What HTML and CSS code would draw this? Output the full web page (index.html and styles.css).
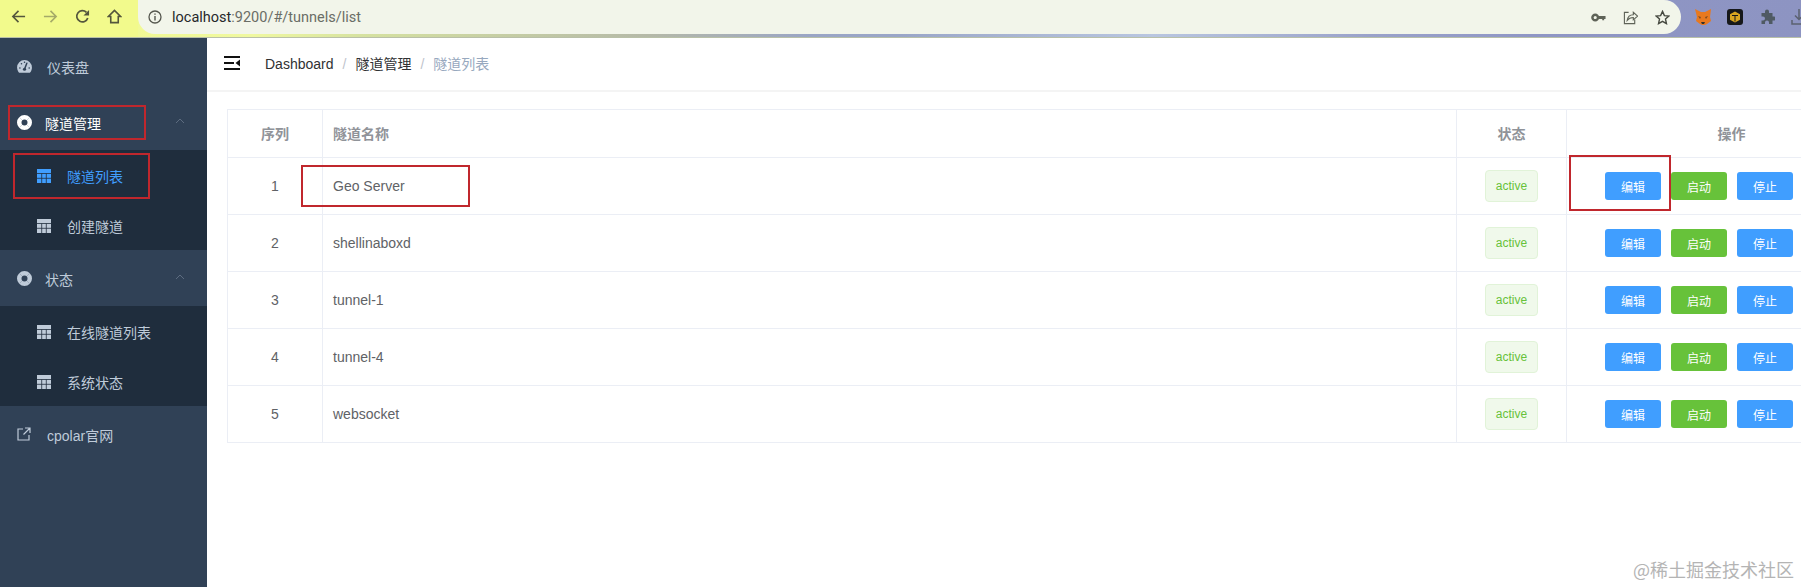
FILE: index.html
```html
<!DOCTYPE html>
<html lang="en">
<head>
    <meta charset="UTF-8">
    <meta name="viewport" content="width=device-width, initial-scale=1.0">
    <title>隧道列表 - cpolar</title>
    <link rel="stylesheet" href="styles.css">
</head>
<body>
    <!-- Browser toolbar -->
    <div class="browser-bar">
        <div class="browser-nav">
            <svg class="nav-icon" viewBox="0 0 16 16"><path d="M15 8H2M8 2L2 8l6 6" fill="none" stroke="#54563c" stroke-width="1.7"/></svg>
            <svg class="nav-icon" viewBox="0 0 16 16"><path d="M1 8h13M8 2l6 6-6 6" fill="none" stroke="#a5aa68" stroke-width="1.7"/></svg>
            <svg class="nav-icon" viewBox="0 0 16 16"><path d="M13.6 9.500A6 6 0 1 1 12.200 3.600" fill="none" stroke="#54563c" stroke-width="1.800"/><path d="M15 1v6H9z" fill="#54563c"/></svg>
            <svg class="nav-icon" viewBox="0 0 16 16"><path d="M8 1.500L1.500 8H4v6.500h8V8h2.500z" fill="none" stroke="#54563c" stroke-width="1.700"/></svg>
        </div>
        <div class="address-bar">
            <svg class="info-icon" viewBox="0 0 14 14"><circle cx="7" cy="7" r="6" fill="none" stroke="#55574e" stroke-width="1.300"/><path d="M7 6v4.500M7 3.400v1.300" stroke="#55574e" stroke-width="1.400"/></svg>
            <span class="url"><span class="url-host">localhost</span>:9200/#/tunnels/list</span>
            <div class="address-actions">
                <svg class="action-icon" viewBox="0 0 16 16"><circle cx="4.500" cy="8" r="3" fill="none" stroke="#5f6358" stroke-width="2.600"/><path d="M7 6.500h8.500v3h-1.500v1.500h-2V9.500H7z" fill="#5f6358"/></svg>
                <svg class="action-icon" viewBox="0 0 16 16"><path d="M6 2.500H1.500v12h11V10" fill="none" stroke="#5f6358" stroke-width="1.200"/><path d="M4.500 11c.5-4 3.500-6 6.500-6V2.500L15.500 6.500 11 10.500V8c-3 0-5 1-6.500 3z" fill="none" stroke="#5f6358" stroke-width="1.200"/></svg>
                <svg class="action-icon" viewBox="0 0 16 16"><path d="M8 1.500l2 4.500 4.800.5-3.600 3.200 1 4.800L8 12.100 3.800 14.500l1-4.800L1.200 6.500 6 6z" fill="none" stroke="#45483f" stroke-width="1.500"/></svg>
            </div>
        </div>
        <div class="extensions">
            <svg class="ext-icon" viewBox="0 0 16 16"><path d="M0 0l6 3h4l6-3-1 8 1 4-4 3-2 1H7l-2-1-4-3 1-4z" fill="#e8791f"/><path d="M6 13h4l-1 2H7z" fill="#33302c"/><path d="M3 7l3 1-1 2zM13 7l-3 1 1 2z" fill="#7a4a22"/></svg>
            <svg class="ext-icon" viewBox="0 0 16 16"><rect width="16" height="16" rx="3" fill="#16181a"/><path d="M8 2.500l5 2.800v5.400l-5 2.800-5-2.800V5.300z" fill="#d9a520"/><path d="M5 6.500h6M8 6.500v6" stroke="#16181a" stroke-width="1"/></svg>
            <svg class="ext-icon puzzle" viewBox="0 0 16 16"><path d="M6 2.500a2 2 0 0 1 4 0V4h3.500v3.500H15a2 2 0 0 1 0 4h-1.500V15H10v-1.500a2 2 0 0 0-4 0V15H2.500v-3.500H4a2 2 0 0 0 0-4H2.500V4H6z" fill="#4f5a63"/></svg>
            <svg class="ext-icon download" viewBox="0 0 16 16"><path d="M8 0v10M4 6.500L8 10.500l4-4M1 11v4h14v-4" fill="none" stroke="#5b6170" stroke-width="1.500"/></svg>
        </div>
    </div>

    <div class="app">
        <!-- Sidebar menu -->
        <div class="sidebar">
            <div class="menu-item">
                <svg class="menu-icon gauge-icon" viewBox="0 0 16 14"><path d="M8 0a8 8 0 0 0-8 8c0 1.800.5 3.400 1.500 4.800.4.600 1 .9 1.700.9h9.600c.7 0 1.300-.3 1.700-.9 1-1.400 1.500-3 1.500-4.800a8 8 0 0 0-8-8z" fill="#bfcbd9"/><path d="M8 10L10.500 3.500M3 8.500h.1M4.700 4h.1M8 2.400h.1M13 8.500h.1" stroke="#304156" stroke-width="1.600" stroke-linecap="round"/><circle cx="8" cy="10" r="1.700" fill="#304156"/></svg>
                <span class="menu-label">仪表盘</span>
            </div>

            <div class="menu-item menu-open">
                <svg class="menu-icon ring-icon" viewBox="0 0 16 16"><circle cx="8" cy="8" r="5.600" fill="none" stroke="#fff" stroke-width="4.800"/><path d="M2.500 2.500l3 3M13.500 2.500l-3 3M2.500 13.500l3-3M13.500 13.500l-3-3" stroke="#8c98a8" stroke-width=".4"/></svg>
                <span class="menu-label group-label">隧道管理</span>
                <svg class="chevron" viewBox="0 0 10 6"><path d="M1 5l4-4 4 4" fill="none" stroke="#5d6c80" stroke-width="1"/></svg>
            </div>
            <div class="submenu">
                <div class="submenu-item submenu-active">
                    <svg class="menu-icon" viewBox="0 0 14 14"><path d="M0 0h14v14H0z" fill="#409eff"/><path d="M0 4.500h14M0 9.300h14M4.700 4.500V14M9.300 4.500V14" stroke="#1f2d3d" stroke-width=".8"/></svg>
                    <span class="menu-label">隧道列表</span>
                </div>
                <div class="submenu-item">
                    <svg class="menu-icon" viewBox="0 0 14 14"><path d="M0 0h14v14H0z" fill="#bfcbd9"/><path d="M0 4.500h14M0 9.300h14M4.700 4.500V14M9.300 4.500V14" stroke="#1f2d3d" stroke-width=".8"/></svg>
                    <span class="menu-label">创建隧道</span>
                </div>
            </div>

            <div class="menu-item">
                <svg class="menu-icon ring-icon" viewBox="0 0 16 16"><circle cx="8" cy="8" r="5.600" fill="none" stroke="#bfcbd9" stroke-width="4.800"/><path d="M2.500 2.500l3 3M13.500 2.500l-3 3M2.500 13.500l3-3M13.500 13.500l-3-3" stroke="#6d7c8f" stroke-width=".4"/></svg>
                <span class="menu-label group-label">状态</span>
                <svg class="chevron" viewBox="0 0 10 6"><path d="M1 5l4-4 4 4" fill="none" stroke="#5d6c80" stroke-width="1"/></svg>
            </div>
            <div class="submenu">
                <div class="submenu-item">
                    <svg class="menu-icon" viewBox="0 0 14 14"><path d="M0 0h14v14H0z" fill="#bfcbd9"/><path d="M0 4.500h14M0 9.300h14M4.700 4.500V14M9.300 4.500V14" stroke="#1f2d3d" stroke-width=".8"/></svg>
                    <span class="menu-label">在线隧道列表</span>
                </div>
                <div class="submenu-item">
                    <svg class="menu-icon" viewBox="0 0 14 14"><path d="M0 0h14v14H0z" fill="#bfcbd9"/><path d="M0 4.500h14M0 9.300h14M4.700 4.500V14M9.300 4.500V14" stroke="#1f2d3d" stroke-width=".8"/></svg>
                    <span class="menu-label">系统状态</span>
                </div>
            </div>

            <div class="menu-item">
                <svg class="menu-icon" viewBox="0 0 14 14"><path d="M6 2H1v11h11V8M8 1h5v5M13 1L6.500 7.500" fill="none" stroke="#bfcbd9" stroke-width="1.200"/></svg>
                <span class="menu-label">cpolar官网</span>
            </div>
        </div>

        <!-- Main content -->
        <div class="main">
            <div class="navbar">
                <svg class="hamburger" viewBox="0 0 16 14"><path d="M0 1h16M0 7h10M0 13h16" stroke="#111" stroke-width="2"/><path d="M16 3.500v7L11.500 7z" fill="#111"/></svg>
                <div class="breadcrumb">
                    <span class="crumb">Dashboard</span>
                    <span class="crumb-sep">/</span>
                    <span class="crumb">隧道管理</span>
                    <span class="crumb-sep">/</span>
                    <span class="crumb crumb-last">隧道列表</span>
                </div>
            </div>
            <div class="container">
                <table class="tunnel-table">
                    <colgroup>
                        <col class="col-index">
                        <col class="col-name">
                        <col class="col-status">
                        <col class="col-actions">
                    </colgroup>
                    <thead>
                        <tr>
                            <th>序列</th>
                            <th class="cell-left">隧道名称</th>
                            <th>状态</th>
                            <th>操作</th>
                        </tr>
                    </thead>
                    <tbody>
                        <tr>
                            <td>1</td>
                            <td class="cell-left">Geo Server</td>
                            <td><span class="tag">active</span></td>
                            <td class="cell-actions"><button class="btn btn-blue">编辑</button><button class="btn btn-green">启动</button><button class="btn btn-blue">停止</button></td>
                        </tr>
                        <tr>
                            <td>2</td>
                            <td class="cell-left">shellinaboxd</td>
                            <td><span class="tag">active</span></td>
                            <td class="cell-actions"><button class="btn btn-blue">编辑</button><button class="btn btn-green">启动</button><button class="btn btn-blue">停止</button></td>
                        </tr>
                        <tr>
                            <td>3</td>
                            <td class="cell-left">tunnel-1</td>
                            <td><span class="tag">active</span></td>
                            <td class="cell-actions"><button class="btn btn-blue">编辑</button><button class="btn btn-green">启动</button><button class="btn btn-blue">停止</button></td>
                        </tr>
                        <tr>
                            <td>4</td>
                            <td class="cell-left">tunnel-4</td>
                            <td><span class="tag">active</span></td>
                            <td class="cell-actions"><button class="btn btn-blue">编辑</button><button class="btn btn-green">启动</button><button class="btn btn-blue">停止</button></td>
                        </tr>
                        <tr>
                            <td>5</td>
                            <td class="cell-left">websocket</td>
                            <td><span class="tag">active</span></td>
                            <td class="cell-actions"><button class="btn btn-blue">编辑</button><button class="btn btn-green">启动</button><button class="btn btn-blue">停止</button></td>
                        </tr>
                    </tbody>
                </table>
            </div>
        </div>
    </div>

    <!-- Red annotation boxes drawn over the screenshot -->
    <div class="mark mark-group"></div>
    <div class="mark mark-sub"></div>
    <div class="mark mark-name"></div>
    <div class="mark mark-edit"></div>

    <div class="watermark">@稀土掘金技术社区</div>
</body>
</html>
```

FILE: styles.css
```css
html, body {
    height: 100%;
}

body {
    margin: 0;
    padding: 0;
    position: relative;
    display: flex;
    flex-direction: column;
    overflow: hidden;
    background-color: #FFFFFF;
    font-family: "Liberation Sans", "Noto Sans CJK SC", sans-serif;
    font-size: 14px;
}

/* Browser toolbar */
.browser-bar {
    height: 38px;
    flex-shrink: 0;
    display: flex;
    box-sizing: border-box;
    border-bottom: 1px solid #b9c0a8;
    background: linear-gradient(90deg, #f3fb88 0%, #eff8a0 14%, #d6e2a0 20%, #b5b9a8 36%, #9aa5c5 45%, #9aa6c8 50%, #b9c6e0 64%, #9aa2ca 76%, #8f96c5 85%, #8d94c2 100%);
}

.browser-nav {
    width: 138px;
    flex-shrink: 0;
    display: flex;
    align-items: center;
    gap: 17px;
    padding: 0 0 4px 11px;
    box-sizing: border-box;
    background-color: #f2fa8c;
}

.nav-icon {
    width: 15px;
    height: 15px;
}

.address-bar {
    width: 1543px;
    height: 34px;
    flex-shrink: 0;
    display: flex;
    align-items: center;
    box-sizing: border-box;
    padding-left: 10px;
    background-color: #f2f5ea;
    border-radius: 0 17px 17px 17px;
}

.info-icon {
    width: 14px;
    height: 14px;
    margin-right: 10px;
}

.url {
    color: #6a6d66;
    font-family: Roboto, "Liberation Sans", sans-serif;
    font-size: 14.5px;
}

.url-host {
    color: #26282a;
}

.address-actions {
    margin-left: auto;
    display: flex;
    align-items: center;
    gap: 17px;
    padding-right: 11px;
}

.action-icon {
    width: 15px;
    height: 15px;
}

.extensions {
    display: flex;
    align-items: center;
    gap: 16px;
    padding: 0 0 4px 14px;
    overflow: hidden;
}

.ext-icon {
    width: 16px;
    height: 16px;
    flex-shrink: 0;
}

/* Page below the toolbar */
.app {
    flex: 1;
    display: flex;
    min-height: 0;
}

/* Sidebar */
.sidebar {
    width: 207px;
    flex-shrink: 0;
    background-color: #304156;
    color: #bfcbd9;
}

.menu-item {
    height: 56px;
    display: flex;
    align-items: center;
    padding-left: 17px;
    position: relative;
}

.menu-open {
    color: #FFFFFF;
}

.menu-icon {
    width: 14px;
    height: 14px;
    flex-shrink: 0;
}

.gauge-icon {
    width: 15px;
    height: 13px;
    margin-right: -1px;
}

.ring-icon {
    width: 15px;
    height: 15px;
    margin-top: 1px;
}

.menu-label {
    padding-top: 2px;
}

.menu-item .menu-label {
    margin-left: 16px;
}

.menu-item .group-label {
    margin-left: 13px;
}

.chevron {
    width: 10px;
    height: 6px;
    position: absolute;
    right: 22px;
    top: 24px;
}

.submenu {
    background-color: #1f2d3d;
}

.submenu-item {
    height: 50px;
    display: flex;
    align-items: center;
    padding-left: 37px;
}

.submenu-item .menu-icon {
    margin-top: 2px;
}

.submenu-item .menu-label {
    margin-left: 16px;
}

.submenu-active {
    color: #409eff;
}

/* Top navigation with breadcrumb */
.main {
    flex: 1;
    min-width: 0;
}

.navbar {
    height: 52px;
    display: flex;
    align-items: center;
    border-bottom: 2px solid #f4f4f4;
}

.hamburger {
    width: 16px;
    height: 14px;
    margin-left: 17px;
    margin-top: -2px;
}

.breadcrumb {
    margin-left: 25px;
    display: flex;
    align-items: baseline;
    gap: 9px;
    line-height: 20px;
}

.crumb {
    color: #303133;
}

.crumb-sep {
    color: #c0c4cc;
}

.crumb-last {
    color: #97a8be;
}

/* Tunnel table */
.container {
    padding: 17px 0 0 20px;
    overflow: hidden;
}

.tunnel-table {
    width: 1669px;
    table-layout: fixed;
    border-collapse: collapse;
    color: #606266;
}

.col-index {
    width: 95px;
}

.col-name {
    width: 1134px;
}

.col-status {
    width: 110px;
}

.col-actions {
    width: 330px;
}

.tunnel-table th,
.tunnel-table td {
    border: 1px solid #ebeef5;
    text-align: center;
    padding: 0;
}

.tunnel-table th {
    height: 45px;
    padding-bottom: 2px;
    color: #909399;
    font-weight: bold;
}

.tunnel-table td {
    height: 56px;
}

.tunnel-table .cell-left {
    text-align: left;
    padding-left: 10px;
}

.tunnel-table .cell-actions {
    text-align: left;
    padding-left: 38px;
}

.tag {
    display: inline-block;
    box-sizing: border-box;
    height: 32px;
    line-height: 30px;
    padding: 0 10px;
    font-size: 12px;
    color: #67c23a;
    background-color: #f0f9eb;
    border: 1px solid #e1f3d8;
    border-radius: 4px;
}

.btn {
    width: 56px;
    height: 28px;
    padding: 0;
    border: none;
    border-radius: 3px;
    color: #FFFFFF;
    font-family: inherit;
    font-size: 12px;
    margin-right: 10px;
    vertical-align: middle;
}

.btn-blue {
    background-color: #409eff;
}

.btn-green {
    background-color: #67c23a;
}

/* Red annotation boxes */
.mark {
    position: absolute;
    box-sizing: border-box;
    border: 2px solid #c0272d;
}

.mark-group {
    left: 8px;
    top: 105px;
    width: 138px;
    height: 35px;
}

.mark-sub {
    left: 13px;
    top: 153px;
    width: 137px;
    height: 46px;
}

.mark-name {
    left: 301px;
    top: 165px;
    width: 169px;
    height: 42px;
}

.mark-edit {
    left: 1569px;
    top: 155px;
    width: 102px;
    height: 56px;
}

.watermark {
    position: absolute;
    right: 7px;
    bottom: 5px;
    color: #b4b4b4;
    font-size: 18px;
    font-family: "Noto Sans CJK SC", sans-serif;
}
```
